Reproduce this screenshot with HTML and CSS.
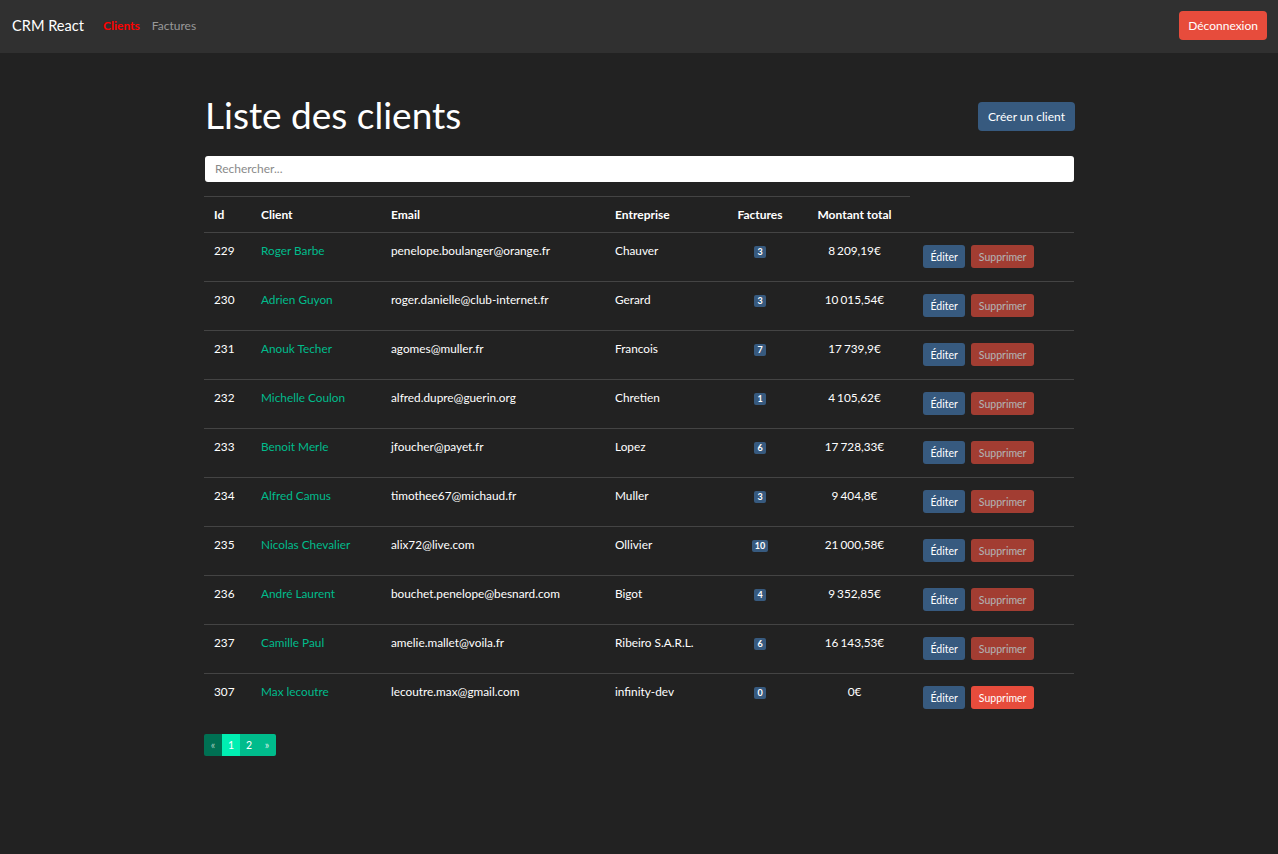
FILE: index.html
```html
<!DOCTYPE html>
<html lang="fr">
<head>
<meta charset="utf-8">
<title>CRM React</title>
<link rel="stylesheet" href="styles.css">
</head>
<body>
<nav class="navbar">
  <a class="brand" href="#">CRM React</a>
  <ul class="nav-links">
    <li><a class="nav-link active" href="#">Clients</a></li>
    <li><a class="nav-link" href="#">Factures</a></li>
  </ul>
  <button class="btn btn-danger btn-logout">Déconnexion</button>
</nav>

<main class="container">
  <div class="page-head">
    <h1>Liste des clients</h1>
    <a class="btn btn-primary btn-create" href="#">Créer un client</a>
  </div>

  <input class="search" type="text" placeholder="Rechercher...">

  <table class="table">
    <thead>
      <tr>
        <th class="c-id">Id</th>
        <th class="c-client">Client</th>
        <th class="c-email">Email</th>
        <th class="c-ent">Entreprise</th>
        <th class="c-fact center">Factures</th>
        <th class="c-total center">Montant total</th>
      </tr>
    </thead>
    <tbody>
      <tr><td>229</td><td><a href="#">Roger Barbe</a></td><td>penelope.boulanger@orange.fr</td><td>Chauver</td><td class="center"><span class="badge">3</span></td><td class="center">8<span class="ts"> </span>209,19€</td><td class="actions"><button class="btn btn-primary btn-sm">Éditer</button><button class="btn btn-danger btn-sm" disabled>Supprimer</button></td></tr>
      <tr><td>230</td><td><a href="#">Adrien Guyon</a></td><td>roger.danielle@club-internet.fr</td><td>Gerard</td><td class="center"><span class="badge">3</span></td><td class="center">10<span class="ts"> </span>015,54€</td><td class="actions"><button class="btn btn-primary btn-sm">Éditer</button><button class="btn btn-danger btn-sm" disabled>Supprimer</button></td></tr>
      <tr><td>231</td><td><a href="#">Anouk Techer</a></td><td>agomes@muller.fr</td><td>Francois</td><td class="center"><span class="badge">7</span></td><td class="center">17<span class="ts"> </span>739,9€</td><td class="actions"><button class="btn btn-primary btn-sm">Éditer</button><button class="btn btn-danger btn-sm" disabled>Supprimer</button></td></tr>
      <tr><td>232</td><td><a href="#">Michelle Coulon</a></td><td>alfred.dupre@guerin.org</td><td>Chretien</td><td class="center"><span class="badge">1</span></td><td class="center">4<span class="ts"> </span>105,62€</td><td class="actions"><button class="btn btn-primary btn-sm">Éditer</button><button class="btn btn-danger btn-sm" disabled>Supprimer</button></td></tr>
      <tr><td>233</td><td><a href="#">Benoit Merle</a></td><td>jfoucher@payet.fr</td><td>Lopez</td><td class="center"><span class="badge">6</span></td><td class="center">17<span class="ts"> </span>728,33€</td><td class="actions"><button class="btn btn-primary btn-sm">Éditer</button><button class="btn btn-danger btn-sm" disabled>Supprimer</button></td></tr>
      <tr><td>234</td><td><a href="#">Alfred Camus</a></td><td>timothee67@michaud.fr</td><td>Muller</td><td class="center"><span class="badge">3</span></td><td class="center">9<span class="ts"> </span>404,8€</td><td class="actions"><button class="btn btn-primary btn-sm">Éditer</button><button class="btn btn-danger btn-sm" disabled>Supprimer</button></td></tr>
      <tr><td>235</td><td><a href="#">Nicolas Chevalier</a></td><td>alix72@live.com</td><td>Ollivier</td><td class="center"><span class="badge">10</span></td><td class="center">21<span class="ts"> </span>000,58€</td><td class="actions"><button class="btn btn-primary btn-sm">Éditer</button><button class="btn btn-danger btn-sm" disabled>Supprimer</button></td></tr>
      <tr><td>236</td><td><a href="#">André Laurent</a></td><td>bouchet.penelope@besnard.com</td><td>Bigot</td><td class="center"><span class="badge">4</span></td><td class="center">9<span class="ts"> </span>352,85€</td><td class="actions"><button class="btn btn-primary btn-sm">Éditer</button><button class="btn btn-danger btn-sm" disabled>Supprimer</button></td></tr>
      <tr><td>237</td><td><a href="#">Camille Paul</a></td><td>amelie.mallet@voila.fr</td><td>Ribeiro S.A.R.L.</td><td class="center"><span class="badge">6</span></td><td class="center">16<span class="ts"> </span>143,53€</td><td class="actions"><button class="btn btn-primary btn-sm">Éditer</button><button class="btn btn-danger btn-sm" disabled>Supprimer</button></td></tr>
      <tr><td>307</td><td><a href="#">Max lecoutre</a></td><td>lecoutre.max@gmail.com</td><td>infinity-dev</td><td class="center"><span class="badge">0</span></td><td class="center">0€</td><td class="actions"><button class="btn btn-primary btn-sm">Éditer</button><button class="btn btn-danger btn-sm">Supprimer</button></td></tr>
    </tbody>
  </table>

  <ul class="pagination">
    <li class="page disabled"><span>«</span></li>
    <li class="page active"><span>1</span></li>
    <li class="page"><span>2</span></li>
    <li class="page"><span>»</span></li>
  </ul>
</main>
</body>
</html>
```

FILE: styles.css
```css
* { box-sizing: border-box; }

html, body {
  margin: 0;
  padding: 0;
}

body {
  background: #222222;
  color: #ffffff;
  font-family: Lato, "Noto Sans", sans-serif;
  font-size: 12px;
  min-height: 854px;
}

a { text-decoration: none; }

/* Navbar */
.navbar {
  display: flex;
  align-items: center;
  height: 53px;
  background: #303030;
  padding: 0 11px 0 12px;
}

.brand {
  color: #ffffff;
  font-size: 14.6px;
  margin-right: 19px;
  position: relative;
  top: -1px;
}

.nav-links {
  display: flex;
  list-style: none;
  margin: 0;
  padding: 0;
  gap: 12px;
  flex: 1;
  position: relative;
  top: -1px;
}

.nav-link {
  color: #999999;
  font-size: 12px;
}

.nav-link.active {
  color: #ff0000;
  font-weight: 700;
}

/* Buttons */
.btn {
  display: inline-block;
  border: 0;
  border-radius: 4px;
  font-family: Lato, "Noto Sans", sans-serif;
  color: #ffffff;
  cursor: pointer;
  text-align: center;
}

.btn-primary { background: #375a7f; }
.btn-danger { background: #e74c3c; }

.btn-logout {
  height: 29px;
  padding: 0 9px;
  font-size: 12px;
  margin-top: -2px;
}

.btn-create {
  height: 29px;
  line-height: 29px;
  padding: 0 10px;
  font-size: 12px;
  margin-right: -1px;
}

.btn-sm {
  height: 23px;
  padding: 0 7.5px;
  font-size: 10.5px;
  border-radius: 3px;
  vertical-align: top;
}

.btn[disabled] { opacity: .65; cursor: default; }

/* Container */
.container {
  width: 870px;
  margin: 0 auto;
  padding-top: 41px;
}

.page-head {
  display: flex;
  align-items: center;
  justify-content: space-between;
  height: 44px;
}

.page-head h1 {
  margin: 0 0 0 1px;
  padding-bottom: 3px;
  font-size: 37px;
  font-weight: 400;
  line-height: 41px;
}

.search {
  display: block;
  width: 869px;
  margin: 18px 0 14px 1px;
  height: 26px;
  border: 0;
  border-radius: 3px;
  background: #ffffff;
  padding: 0 10px 1px;
  font-family: Lato, "Noto Sans", sans-serif;
  font-size: 12px;
  color: #444;
}

.search::placeholder { color: #8a8a8a; }

/* Table */
.table {
  width: 870px;
  border-collapse: separate;
  border-spacing: 0;
  table-layout: fixed;
}

.table th {
  text-align: left;
  font-weight: 700;
  font-size: 12px;
  line-height: 19px;
  padding: 8px 10px;
  border-top: 1px solid #444444;
}

.table td {
  font-size: 11.8px;
  line-height: 19.5px;
  padding: 8px 10px;
  height: 49px;
  vertical-align: top;
  border-top: 1px solid #444444;
  white-space: nowrap;
}

.table .center { text-align: center; }

.ts { letter-spacing: -1px; }

.c-id { width: 47px; }
.c-client { width: 130px; }
.c-email { width: 224px; }
.c-ent { width: 116px; }
.c-fact { width: 78px; }
.c-total { width: 111px; }

.table td a { color: #00bc8c; }

.table td.actions {
  padding-left: 13px;
}

.actions .btn { margin-top: 4px; margin-right: 6px; }

.badge {
  display: inline-block;
  background: #375a7f;
  color: #fff;
  font-size: 9px;
  font-weight: 700;
  line-height: 12px;
  min-width: 12px;
  padding: 0 3px;
  border-radius: 2px;
  vertical-align: 0;
}

/* Pagination */
.pagination {
  display: flex;
  list-style: none;
  margin: 12px 0 0 0;
  padding: 0;
}

.page span {
  display: block;
  width: 18px;
  height: 22px;
  line-height: 22px;
  text-align: center;
  font-size: 10.5px;
  color: #fff;
  background: #00bc8c;
}

.page.disabled span { background: #007053; color: #9fc9bb; border-radius: 2px 0 0 2px; }
.page.active span { background: #00efb2; }
.page:last-child span { border-radius: 0 2px 2px 0; color: #cfeee5; }
```
